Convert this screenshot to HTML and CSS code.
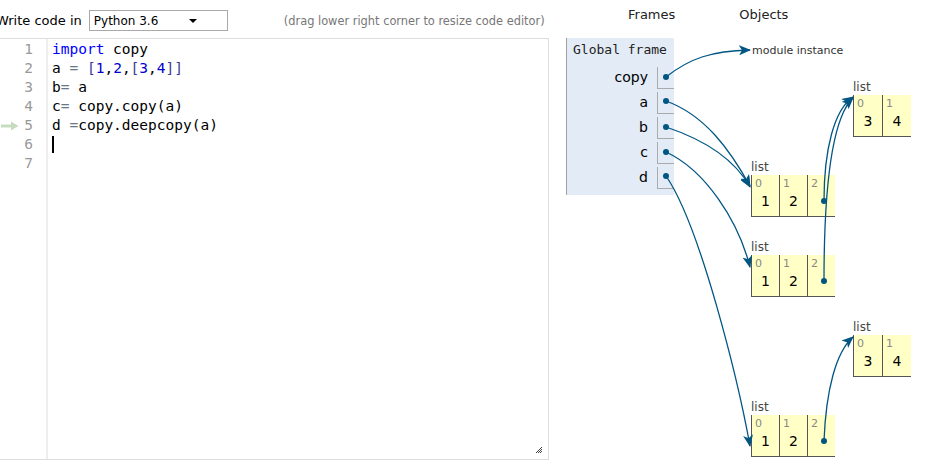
FILE: index.html
```html
<!DOCTYPE html>
<html>
<head>
<meta charset="utf-8">
<link rel="stylesheet" href="styles.css">
</head>
<body>
<div class="page">
  <div class="left">
    <div class="toolbar">
      <span class="label">Write code in</span>
      <div class="select"><span>Python 3.6</span><span class="caret"></span></div>
      <span class="hint">(drag lower right corner to resize code editor)</span>
    </div>
    <div class="editor">
      <div class="gutter">
        <div class="ln">1</div>
        <div class="ln">2</div>
        <div class="ln">3</div>
        <div class="ln">4</div>
        <div class="ln cur"><svg class="curarrow" width="18" height="10" viewBox="0 0 18 10"><path d="M0 5H13" stroke="#c5dcc0" stroke-width="3"/><path d="M10 0.5L17.5 5L10 9.5Z" fill="#c5dcc0"/></svg>5</div>
        <div class="ln">6</div>
        <div class="ln">7</div>
      </div>
      <div class="code">
        <div class="line"><span class="kw">import</span> copy</div>
        <div class="line">a <span class="op">=</span> <span class="br">[</span><span class="num">1</span>,<span class="num">2</span>,<span class="br">[</span><span class="num">3</span>,<span class="num">4</span><span class="br">]]</span></div>
        <div class="line">b<span class="op">=</span> a</div>
        <div class="line">c<span class="op">=</span> copy.copy(a)</div>
        <div class="line">d <span class="op">=</span>copy.deepcopy(a)</div>
        <div class="line"><span class="cursor"></span></div>
        <div class="line"></div>
      </div>
      <svg class="grip" width="8" height="8" viewBox="0 0 8 8"><path d="M7 1L1 7M7 3L3 7M7 5L5 7" stroke="#444" stroke-width="1"/></svg>
    </div>
  </div>
  <div class="viz">
    <div class="heads"><span class="h-frames">Frames</span><span class="h-objects">Objects</span></div>
    <div class="frame">
      <div class="ftitle">Global frame</div>
      <div class="var"><span class="vname">copy</span><span class="vbox"></span></div>
      <div class="var"><span class="vname">a</span><span class="vbox"></span></div>
      <div class="var"><span class="vname">b</span><span class="vbox"></span></div>
      <div class="var"><span class="vname">c</span><span class="vbox"></span></div>
      <div class="var"><span class="vname">d</span><span class="vbox"></span></div>
    </div>
    <div class="module">module instance</div>

    <div class="list l34a">
      <div class="ltype">list</div>
      <div class="cells"><div class="cell"><span class="idx">0</span><span class="val">3</span></div><div class="cell"><span class="idx">1</span><span class="val">4</span></div></div>
    </div>
    <div class="list l12a">
      <div class="ltype">list</div>
      <div class="cells"><div class="cell"><span class="idx">0</span><span class="val">1</span></div><div class="cell"><span class="idx">1</span><span class="val">2</span></div><div class="cell"><span class="idx">2</span><span class="val"></span></div></div>
    </div>
    <div class="list l12b">
      <div class="ltype">list</div>
      <div class="cells"><div class="cell"><span class="idx">0</span><span class="val">1</span></div><div class="cell"><span class="idx">1</span><span class="val">2</span></div><div class="cell"><span class="idx">2</span><span class="val"></span></div></div>
    </div>
    <div class="list l34b">
      <div class="ltype">list</div>
      <div class="cells"><div class="cell"><span class="idx">0</span><span class="val">3</span></div><div class="cell"><span class="idx">1</span><span class="val">4</span></div></div>
    </div>
    <div class="list l12c">
      <div class="ltype">list</div>
      <div class="cells"><div class="cell"><span class="idx">0</span><span class="val">1</span></div><div class="cell"><span class="idx">1</span><span class="val">2</span></div><div class="cell"><span class="idx">2</span><span class="val"></span></div></div>
    </div>
  </div>
  <svg class="arrows" width="935" height="470" viewBox="0 0 935 470">
    <defs>
      <marker id="ah" viewBox="0 0 12 10" refX="11" refY="5" markerWidth="12" markerHeight="10" markerUnits="userSpaceOnUse" orient="auto">
        <path d="M0 0L12 5L0 10L3 5Z" fill="#005583"/>
      </marker>
    </defs>
    <g fill="none" stroke="#005583" stroke-width="1.3">
      <path d="M666 77C690 58 712 51 750 50" marker-end="url(#ah)"/>
      <path d="M666 101C705 115 730 150 750 186" marker-end="url(#ah)"/>
      <path d="M666 127C705 140 735 160 750 187" marker-end="url(#ah)"/>
      <path d="M666 152C705 170 738 220 750 267" marker-end="url(#ah)"/>
      <path d="M666 176C700 225 738 380 750 446" marker-end="url(#ah)"/>
      <path d="M824 201C824 150 834 110 853 97" marker-end="url(#ah)"/>
      <path d="M824 281C824 200 830 120 853 98" marker-end="url(#ah)"/>
      <path d="M824 441C826 390 836 352 853 337" marker-end="url(#ah)"/>
    </g>
    <g fill="#005583">
      <circle cx="666" cy="77" r="3"/>
      <circle cx="666" cy="101" r="3"/>
      <circle cx="666" cy="127" r="3"/>
      <circle cx="666" cy="152" r="3"/>
      <circle cx="666" cy="176" r="3"/>
      <circle cx="824" cy="201" r="3"/>
      <circle cx="824" cy="281" r="3"/>
      <circle cx="824" cy="441" r="3"/>
    </g>
  </svg>
</div>
</body>
</html>
```

FILE: styles.css
```css
html, body {
  margin: 0;
  padding: 0;
  background: #fff;
}
.page {
  position: relative;
  width: 935px;
  height: 470px;
  overflow: hidden;
  display: flex;
  font-family: "DejaVu Sans", Verdana, sans-serif;
  color: #000;
}
.left {
  margin-left: -4px;
  width: 553px;
  flex: none;
}
.toolbar {
  display: flex;
  align-items: center;
  height: 21px;
  margin-top: 10px;
  margin-bottom: 7px;
}
.label {
  font-size: 13px;
  margin-right: 7px;
}
.select {
  box-sizing: border-box;
  width: 139px;
  height: 21px;
  border: 1px solid #a9a9a9;
  display: flex;
  align-items: center;
  padding-left: 4px;
  font-size: 12px;
  position: relative;
}
.caret {
  position: absolute;
  right: 30px;
  top: 8px;
  width: 0;
  height: 0;
  border-left: 4px solid transparent;
  border-right: 4px solid transparent;
  border-top: 4px solid #000;
}
.hint {
  font-size: 11.4px;
  color: #777;
  margin-left: 56px;
}
.editor {
  position: relative;
  box-sizing: border-box;
  height: 422px;
  border: 1px solid #ddd;
  display: flex;
  font-family: "DejaVu Sans Mono", monospace;
  font-size: 14.5px;
  line-height: 19px;
}
.gutter {
  width: 36px;
  padding-right: 13px;
  border-right: 2px solid #eee;
  padding-top: 1px;
  color: #999;
  text-align: right;
  flex: none;
}
.ln {
  height: 19px;
  position: relative;
}
.curarrow {
  position: absolute;
  left: 4px;
  top: 5px;
}
.code {
  padding-left: 4px;
  padding-top: 1px;
}
.line {
  height: 19px;
  white-space: pre;
  color: #000;
}
.kw { color: #0000ff; }
.num { color: #0000cd; }
.br { color: #3a3a9a; }
.op { color: #687687; }
.cursor {
  display: inline-block;
  width: 2px;
  height: 17px;
  background: #000;
  vertical-align: top;
  margin-top: 1px;
}
.grip {
  position: absolute;
  right: 5px;
  bottom: 5px;
}
.viz {
  position: relative;
  flex: 1;
  margin-left: 17px;
}
.heads {
  display: flex;
  font-size: 13px;
  height: 28px;
  align-items: center;
  color: #222;
}
.h-frames { margin-left: 62px; }
.h-objects { margin-left: 64px; }
.frame {
  margin-top: 10px;
  box-sizing: border-box;
  width: 108px;
  height: 157px;
  background: #e2ebf6;
  border-left: 1px solid #a0a0a0;
}
.ftitle {
  font-family: "DejaVu Sans Mono", monospace;
  font-size: 13px;
  height: 27px;
  line-height: 24px;
  padding-left: 6px;
  color: #222;
}
.var {
  display: flex;
  justify-content: flex-end;
  height: 25px;
}
.vname {
  font-size: 14px;
  line-height: 25px;
  padding-right: 9px;
  color: #000;
}
.vbox {
  box-sizing: border-box;
  width: 17px;
  height: 22px;
  margin-top: 2px;
  border-left: 1px solid #aaa;
  border-bottom: 1px solid #aaa;
}
.module {
  position: absolute;
  left: 186px;
  top: 44px;
  font-size: 11px;
  color: #333;
}
.list {
  position: absolute;
}
.ltype {
  font-size: 12px;
  color: #444;
  height: 15px;
  line-height: 15px;
}
.cells {
  display: flex;
  background: #ffffc6;
}
.cell {
  box-sizing: border-box;
  width: 28px;
  height: 42px;
  border-left: 1px solid #555;
  border-bottom: 1px solid #555;
  position: relative;
}
.l34a .cell, .l34b .cell { width: 29px; }
.idx {
  position: absolute;
  left: 3px;
  top: 2px;
  font-size: 11px;
  color: #888;
}
.val {
  position: absolute;
  left: 0;
  right: 0;
  top: 18px;
  text-align: center;
  font-size: 14px;
}
.l34a { left: 287px; top: 80px; }
.l12a { left: 185px; top: 160px; }
.l12b { left: 185px; top: 240px; }
.l34b { left: 287px; top: 320px; }
.l12c { left: 185px; top: 400px; }
.arrows {
  position: absolute;
  left: 0;
  top: 0;
  pointer-events: none;
}
```
